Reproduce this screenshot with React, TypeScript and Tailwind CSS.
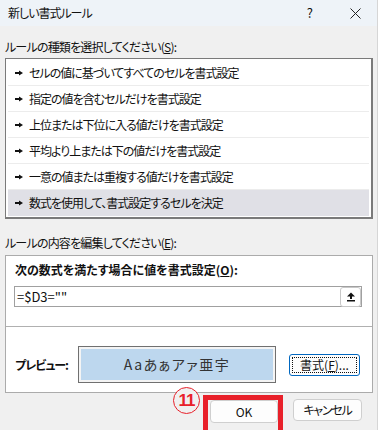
import React from 'react';

const ruleTypes = [
  'セルの値に基づいてすべてのセルを書式設定',
  '指定の値を含むセルだけを書式設定',
  '上位または下位に入る値だけを書式設定',
  '平均より上または下の値だけを書式設定',
  '一意の値または重複する値だけを書式設定',
  '数式を使用して、書式設定するセルを決定',
];

const Bullet = () => (
  <svg width="8" height="6" viewBox="0 0 8 6" className="shrink-0">
    <polygon points="0,2 4,2 4,0.5 8,3 4,5.5 4,4 0,4" fill="#111" />
  </svg>
);

export default function App() {
  return (
    <div className="relative w-[378px] h-[430px] overflow-hidden bg-[#f0f0f0] border-r border-[#d6d6d6] text-[12px] text-[#111] font-['Noto_Sans_CJK_JP','Noto_Sans',sans-serif] [font-feature-settings:'palt']">
      {/* title bar */}
      <div className="flex items-center h-[26px] bg-[#eef3f8] pl-[8px]">
        <span className="leading-[16px] tracking-[-1px]">新しい書式ルール</span>
        <span className="ml-auto mr-[37px] text-[13px] leading-[16px]">?</span>
        <svg width="11" height="11" viewBox="0 0 11 11" className="mr-[16px]">
          <path d="M0.5 0.5 L10.5 10.5 M10.5 0.5 L0.5 10.5" stroke="#222" strokeWidth="1" />
        </svg>
      </div>

      {/* rule type */}
      <div className="mt-[13px] ml-[5px] h-[16px] leading-[16px] tracking-[-0.8px]">
        ルールの種類を選択してください(<span className="underline">S</span>):
      </div>
      <div className="mt-[3px] mx-[5px] w-[368px] bg-white border border-[#7a7a7a] border-r-2 border-b-2 pt-[1px] pb-[1px] px-[2px]">
        {ruleTypes.map((t, i) => (
          <div
            key={i}
            className={`flex items-center gap-[6px] h-[26px] pl-[7px] ${
              i === ruleTypes.length - 1 ? 'bg-[#e0e0e6]' : 'border-b border-[#ececec]'
            }`}
          >
            <Bullet />
            <span className="leading-[16px] tracking-[-1px]">{t}</span>
          </div>
        ))}
      </div>

      {/* rule edit */}
      <div className="mt-[16px] ml-[5px] h-[16px] leading-[16px] tracking-[-0.8px]">
        ルールの内容を編集してください(<span className="underline">E</span>):
      </div>
      <div className="mt-[4px] mx-[5px] w-[368px] h-[138px] bg-white border border-[#ababab]">
        <div className="pt-[6px] pl-[9px] h-[22px] leading-[16px] font-bold">
          次の数式を満たす場合に値を書式設定(<span className="underline">O</span>):
        </div>
        <div className="mt-[8px] ml-[8px] w-[348px] h-[21px] border border-[#a0a0a0] flex items-center">
          <span className="pl-[2px] text-[13px] leading-[16px] text-[#111]">=$D3=""</span>
          <div className="ml-auto w-[21px] h-[20px] rounded-[3px] border border-[#c8c8c8] bg-white flex items-center justify-center">
            <svg width="10" height="10" viewBox="0 0 10 10">
              <polygon points="5,0.5 9,4.5 1,4.5" fill="#111" />
              <rect x="4" y="4" width="2" height="3" fill="#111" />
              <rect x="1" y="8" width="8" height="1.5" fill="#111" />
            </svg>
          </div>
        </div>
        <div className="mt-[19px] h-px bg-[#b0b0b0]" />
        <div className="mt-[19px] flex items-center pl-[9px]">
          <span className="w-[63px] shrink-0 font-bold leading-[16px] pt-[1px] tracking-[-1px]">プレビュー:</span>
          <div className="w-[198px] h-[37px] border border-[#707070] p-[2px] bg-[#f4f4f4]">
            <div className="h-full bg-[#bdd7ee] flex items-center justify-center text-[14px] text-[#333] tracking-[1.5px] [font-feature-settings:'normal']">
              Aaあぁアァ亜宇
            </div>
          </div>
          <div className="ml-[13px] w-[71px] h-[22px] rounded-[3px] border border-[#0067c0] bg-[#fdfdfd] p-[2px]">
            <div className="h-full border border-dotted border-[#111] flex items-center justify-center leading-[14px]">
              書式(<span className="underline">F</span>)...
            </div>
          </div>
        </div>
      </div>

      {/* buttons */}
      <div className="mt-[2px] flex justify-end pr-[15px] gap-[10px]">
        <div className="w-[80px] h-[40px] border-[5px] border-[#e8202a] pl-[2px]">
          <div className="w-[68px] h-[23px] rounded-[4px] border border-[#cfcfcf] bg-[#fdfdfd] flex items-center justify-center leading-[16px]">
            OK
          </div>
        </div>
        <div className="mt-[4px] w-[69px] h-[22px] rounded-[4px] border border-[#cfcfcf] bg-[#fdfdfd] flex items-center justify-center leading-[16px] tracking-[-1.2px]">
          キャンセル
        </div>
      </div>

      {/* annotation */}
      <div className="absolute left-[173px] top-[387px] w-[27px] h-[27px] rounded-full border-[1.5px] border-[#e8202a] bg-[#f0f0f0] flex items-center justify-center text-[#e8202a] font-bold text-[17px] leading-none tracking-[-1px] font-['Liberation_Sans',sans-serif]">
        11
      </div>
    </div>
  );
}
